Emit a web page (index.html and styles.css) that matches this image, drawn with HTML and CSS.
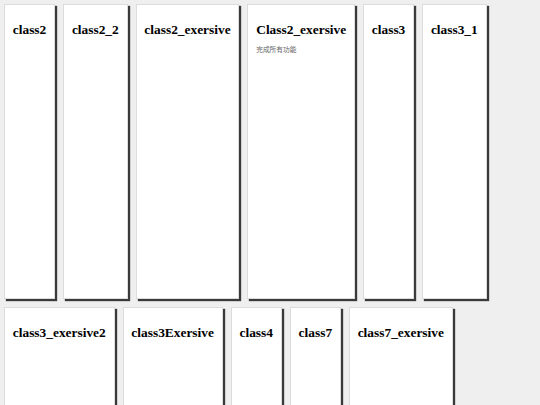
FILE: index.html
```html
<!DOCTYPE html>
<html lang="en">
<head>
<meta charset="utf-8">
<title>classes</title>
<link rel="stylesheet" href="styles.css">
</head>
<body>
<div class="grid">
  <div class="card"><h3 class="title">class2</h3></div>
  <div class="card"><h3 class="title">class2_2</h3></div>
  <div class="card"><h3 class="title">class2_exersive</h3></div>
  <div class="card"><h3 class="title">Class2_exersive</h3><p class="desc" lang="zh-CN">完成所有功能</p></div>
  <div class="card"><h3 class="title">class3</h3></div>
  <div class="card"><h3 class="title">class3_1</h3></div>
  <div class="card"><h3 class="title">class3_exersive2</h3></div>
  <div class="card"><h3 class="title">class3Exersive</h3></div>
  <div class="card"><h3 class="title">class4</h3></div>
  <div class="card"><h3 class="title">class7</h3></div>
  <div class="card"><h3 class="title">class7_exersive</h3></div>
</div>
</body>
</html>
```
FILE: styles.css
```css
html, body {
  margin: 0;
  padding: 0;
  background: #efefef;
}
.grid {
  display: flex;
  flex-wrap: wrap;
  align-items: flex-start;
  padding: 0;
}
.card {
  box-sizing: border-box;
  margin: 4px;
  height: 295px;
  padding: 17px 7.8px 0 7.8px;
  background: #ffffff;
  border: 1px solid #dcdcdc;
  box-shadow: 2px 2px 1px #3a3a3a;
}
.title {
  margin: 0;
  font-family: "Liberation Serif", "Times New Roman", serif;
  font-weight: 700;
  font-size: 13.4px;
  line-height: 15px;
  color: #000;
  white-space: nowrap;
}
.desc {
  margin: 8px 0 0 0;
  font-family: "Noto Sans CJK SC", "Noto Sans", sans-serif;
  font-size: 6.7px;
  line-height: 8px;
  color: #666;
}
```
